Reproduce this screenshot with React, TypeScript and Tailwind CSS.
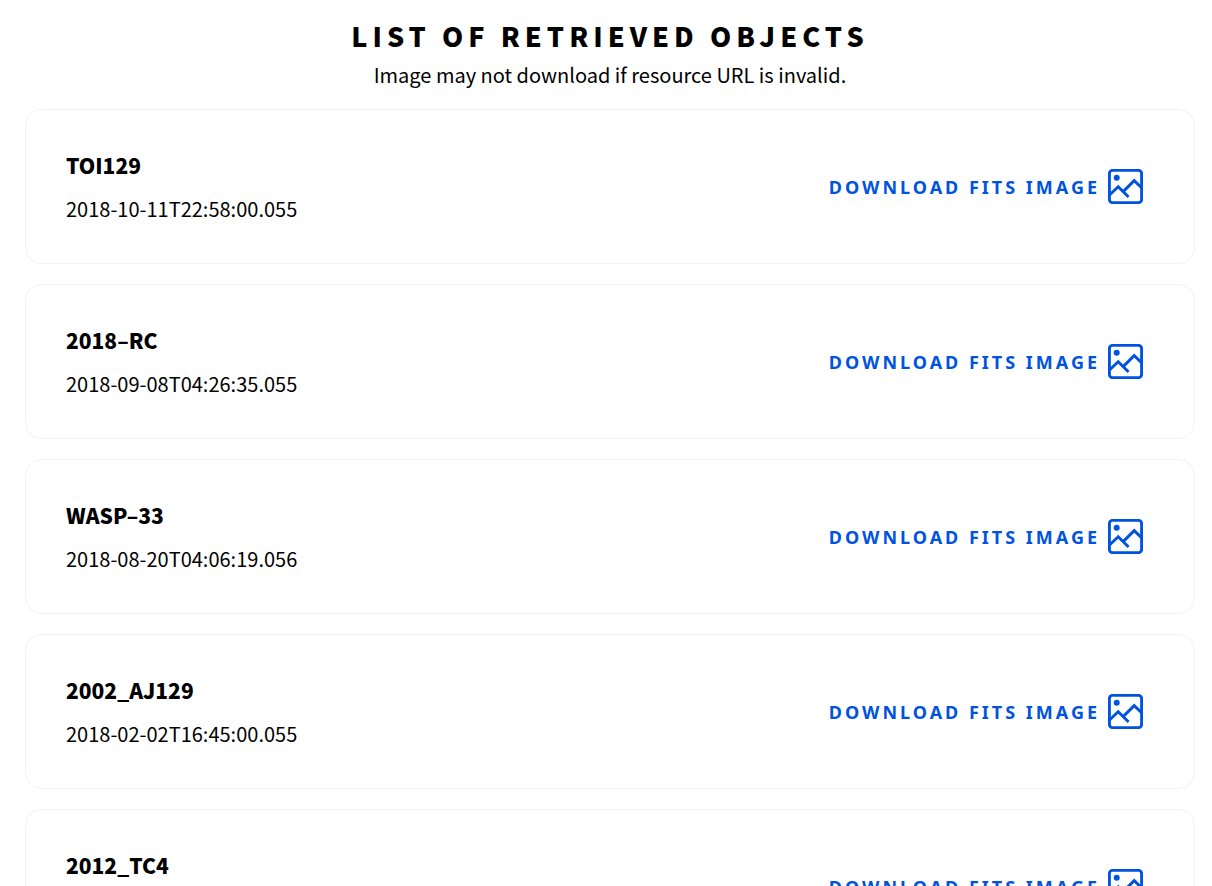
const objects = [
  { name: "TOI129", date: "2018-10-11T22:58:00.055" },
  { name: "2018–RC", date: "2018-09-08T04:26:35.055" },
  { name: "WASP–33", date: "2018-08-20T04:06:19.056" },
  { name: "2002_AJ129", date: "2018-02-02T16:45:00.055" },
  { name: "2012_TC4", date: "2017-10-10T05:12:00.055" },
];

function ImageIcon() {
  return (
    <svg
      viewBox="0 0 35 35"
      className="size-[35px] shrink-0"
      fill="none"
      stroke="currentColor"
      strokeWidth="2.9"
      aria-hidden="true"
    >
      <rect x="1.4" y="1.4" width="32.2" height="32.2" rx="3" />
      <circle cx="8.7" cy="8.7" r="3" fill="currentColor" stroke="none" />
      <path d="M1.5 26 10.2 17.8 20.6 28M15.4 22.4 26.2 11.6 33.6 18.8" />
    </svg>
  );
}

function ObjectCard({ name, date }: { name: string; date: string }) {
  return (
    <li className="flex items-center justify-between rounded-2xl border border-[#f2f2f2] py-10 pr-[51px] pl-10">
      <div className="flex flex-col gap-[13px]">
        <h2 className="text-[21px] leading-[31px] font-black">{name}</h2>
        <p className="text-xl leading-[29px]">{date}</p>
      </div>
      <a href="#" className="flex items-center gap-2 text-[#0053e0]">
        <span className="font-['Noto_Sans',sans-serif] text-lg font-bold tracking-[3px]">DOWNLOAD FITS IMAGE</span>
        <ImageIcon />
      </a>
    </li>
  );
}

export default function App() {
  return (
    <main className="bg-white pt-[15px] pr-[17px] pb-5 pl-[25px] font-['Noto_Sans_CJK_JP','Noto_Sans_CJK_SC',sans-serif] text-black">
      <header className="text-center">
        <h1 className="text-[27px] leading-[42px] font-black tracking-[5px]">LIST OF RETRIEVED OBJECTS</h1>
        <p className="text-xl leading-9">Image may not download if resource URL is invalid.</p>
      </header>
      <ul className="mt-4 flex flex-col gap-5">
        {objects.map((object) => (
          <ObjectCard key={object.name} {...object} />
        ))}
      </ul>
    </main>
  );
}
